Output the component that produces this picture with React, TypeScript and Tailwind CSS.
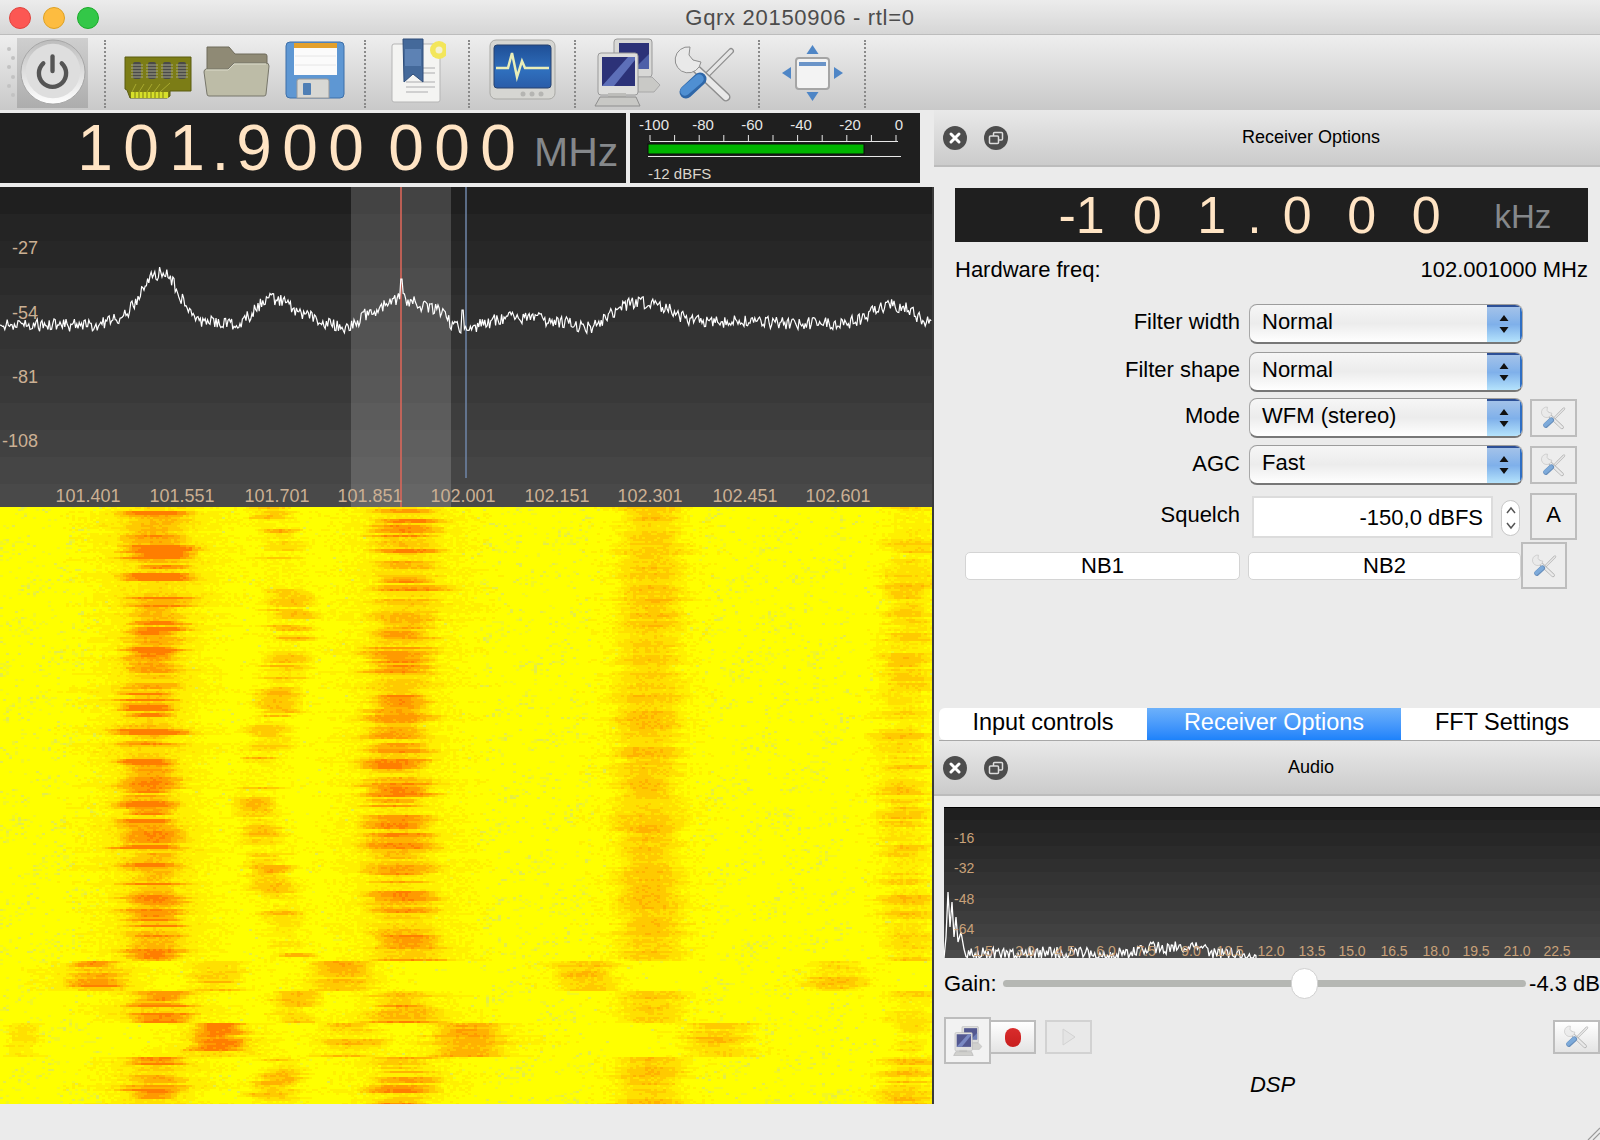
import React from "react";

// small seeded random so the waterfall and traces stay the same on every load
const makeRand = (seed: number) => () => {
  seed |= 0;
  seed = (seed + 0x6d2b79f5) | 0;
  let t = Math.imul(seed ^ (seed >>> 15), 1 | seed);
  t = (t + Math.imul(t ^ (t >>> 7), 61 | t)) ^ t;
  return ((t ^ (t >>> 14)) >>> 0) / 4294967296;
};

type Peak = { c: number; w: number; a: number; v: number };

const normalPeaks: Peak[] = [
  { c: 152, w: 34, a: 0.98, v: 0.55 },
  { c: 275, w: 24, a: 0.56, v: 0.75 },
  { c: 400, w: 38, a: 0.82, v: 0.6 },
  { c: 648, w: 38, a: 0.58, v: 0.28 },
  { c: 905, w: 30, a: 0.52, v: 0.5 },
];

const sectionFor = (y: number): Peak[] => {
  if (y >= 960 && y < 990)
    return [
      { c: 90, w: 32, a: 0.95, v: 0.5 },
      { c: 212, w: 30, a: 0.58, v: 0.55 },
      { c: 335, w: 34, a: 0.68, v: 0.55 },
      { c: 582, w: 34, a: 0.62, v: 0.3 },
      { c: 832, w: 32, a: 0.58, v: 0.4 },
    ];
  if (y >= 1022 && y < 1057)
    return [
      { c: 18, w: 22, a: 0.35, v: 0.4 },
      { c: 212, w: 30, a: 1.0, v: 0.65 },
      { c: 345, w: 34, a: 0.58, v: 0.6 },
      { c: 465, w: 44, a: 0.78, v: 0.22 },
      { c: 713, w: 38, a: 0.58, v: 0.35 },
      { c: 905, w: 22, a: 0.4, v: 0.5 },
    ];
  return normalPeaks;
};

const waterColors = ["#fff000", "#ffe000", "#ffca00", "#ffb200", "#ff9a00", "#ff7e00"];
const waterLimits = [0.2, 0.33, 0.47, 0.62, 0.77, 0.93];

const buildWaterfall = () => {
  const rand = makeRand(77);
  const paths: string[] = waterColors.map(() => "");
  let green = "";
  let green2 = "";
  let streaks = [1, 1, 1, 1, 1, 1];
  let widths = [1, 1, 1, 1, 1, 1];
  let moves = [0, 0, 0, 0, 0, 0];
  for (let row = 0; row < 299; row++) {
    const y = 507 + row * 2;
    const peaks = sectionFor(y);
    // streaks hold for a few rows, like one FFT frame smeared by the display
    streaks = streaks.map((s, n) => {
      if (rand() > 0.55) return s;
      const v = peaks[n] ? peaks[n].v : 0.4;
      return 1 - v * 0.35 + (rand() - 0.5) * v * 1.5;
    });
    widths = widths.map((w) => (rand() > 0.55 ? w : 0.75 + rand() * 0.55));
    moves = moves.map((m) => (rand() > 0.55 ? m : (rand() - 0.5) * 20));
    const slow = Math.sin(y / 70) * 5;
    const second = Math.sin((y - 560) / 55) * 13;
    for (let col = 0; col < 311; col++) {
      const x = col * 3;
      let i = 0;
      peaks.forEach((p, n) => {
        const c = p.c + slow * (p.v > 0.3 ? 1 : 0.4) + moves[n] * p.v + (p === normalPeaks[1] ? second : 0);
        const d = (x - c) / (p.w * widths[n]);
        const core = p.a * streaks[n] * Math.exp(-d * d * d * d * 0.6 - d * d * 0.5);
        const haze = p.a * 0.36 * Math.exp(-(d * d) / 5);
        i = Math.max(i, core, haze);
      });
      i += (rand() - 0.5) * 0.16;
      const run = `M${x} ${row * 2}h3v2h-3z`;
      let bucket = -1;
      waterLimits.forEach((lim, n) => {
        if (i > lim) bucket = n;
      });
      if (bucket >= 0) {
        paths[bucket] += run;
      } else {
        // pale green mottling sits in clumps, mostly away from the carriers
        const far = x < 100 || (x > 700 && x < 850) || (x > 480 && x < 590) ? 0.2 : 0.05;
        const clump = Math.sin(x / 17 + y / 9) * Math.sin(y / 23 - x / 31) > 0.15 ? 1 : 0.25;
        const r = rand();
        if (r < far * clump * 0.3) green2 += run;
        else if (r < far * clump) green += run;
      }
    }
  }
  return { paths, green, green2 };
};

const waterfall = buildWaterfall();

const envelope: [number, number][] = [
  [0, 325], [100, 325], [125, 315], [140, 295], [150, 278], [163, 272], [175, 285], [190, 315], [205, 322],
  [240, 325], [255, 310], [265, 298], [280, 300], [300, 312], [320, 322], [350, 328], [365, 315], [385, 305],
  [400, 298], [420, 305], [440, 312], [452, 325], [462, 330], [490, 322], [505, 318], [530, 318], [560, 322],
  [590, 328], [610, 315], [625, 305], [645, 303], [665, 308], [685, 318], [700, 322], [740, 322], [800, 323],
  [850, 323], [865, 316], [885, 305], [905, 307], [920, 318], [932, 325],
];

const envelopeAt = (x: number) => {
  for (let n = 1; n < envelope.length; n++) {
    const [x1, y1] = envelope[n];
    if (x <= x1) {
      const [x0, y0] = envelope[n - 1];
      return y0 + ((y1 - y0) * (x - x0)) / (x1 - x0);
    }
  }
  return 325;
};

const spectrumTrace = (() => {
  const rand = makeRand(11);
  const pts: string[] = [];
  for (let x = 0; x <= 932; x += 1.2) {
    let y = envelopeAt(x) + (rand() - 0.5) * 13;
    if (Math.abs(x - 401) < 1.3) y = 279;
    if (Math.abs(x - 463) < 1.3) y = 310;
    pts.push(`${x.toFixed(1)},${(y - 187).toFixed(1)}`);
  }
  return pts.join(" ");
})();

const audioTrace = (() => {
  const rand = makeRand(5);
  const pts: string[] = ["0,151", "2,130", "4,85", "6,120", "8,95", "10,130", "12,110", "14,135", "17,125", "20,142"];
  for (let x = 22; x < 312; x += 1.3) {
    const base = x < 60 ? 147 : x < 150 ? 146 : x < 175 ? 151 : x < 195 ? 146 : x < 265 ? 141 : x < 300 ? 147 : 152;
    const y = base + (rand() - 0.5) * 13;
    pts.push(`${x.toFixed(1)},${Math.min(y, 151).toFixed(1)}`);
  }
  pts.push("312,151");
  return pts.join(" ");
})();

const freqLabels = [
  ["101.401", 88], ["101.551", 182], ["101.701", 277], ["101.851", 370], ["102.001", 463],
  ["102.151", 557], ["102.301", 650], ["102.451", 745], ["102.601", 838],
] as const;

const audioFreqs = [
  ["1.5", 39], ["3.0", 81], ["4.5", 121], ["6.0", 162], ["7.5", 202], ["9.0", 247], ["10.5", 286], ["12.0", 327],
  ["13.5", 368], ["15.0", 408], ["16.5", 450], ["18.0", 492], ["19.5", 532], ["21.0", 573], ["22.5", 613],
] as const;

const bandShades = ["#1f1f1f", "#242424", "#272727", "#2b2b2b", "#2f2f2f", "#333333", "#363636", "#393939", "#3d3d3d", "#414141", "#454545", "#494949"];

const PowerButton = () => (
  <div className="ml-[2px] mt-[3px] flex h-[70px] w-[71px] items-center justify-center bg-gradient-to-b from-[#cfcfcf] to-[#adadad]">
    <svg viewBox="0 0 70 70" className="h-[68px] w-[68px]">
      <defs>
        <linearGradient id="powerRing" x1="0" y1="0" x2="0" y2="1">
          <stop offset="0" stopColor="#bcbcbc" />
          <stop offset="1" stopColor="#ffffff" />
        </linearGradient>
      </defs>
      <circle cx="35" cy="34" r="33" fill="url(#powerRing)" stroke="#a5a5a5" />
      <circle cx="35" cy="33" r="28" fill="#dedede" />
      <path d="M25 25a14 14 0 1 0 19 0" fill="none" stroke="#555" strokeWidth="4.5" strokeLinecap="round" />
      <path d="M34.500 18v15" fill="none" stroke="#555" strokeWidth="4.5" strokeLinecap="round" />
    </svg>
  </div>
);

const RamIcon = () => (
  <svg viewBox="0 0 68 44" className="ml-[18px] mt-[21px] h-[44px] w-[68px]">
    <path d="M1 1h66v34H46v5l-3 2H6l-3-8-2-1z" fill="#7c7d16" stroke="#5b5c10" />
    {[9, 24, 39, 54].map((x) => (
      <g key={x}>
        <rect x={x} y="6" width="8" height="17" rx="2" fill="#4a4a48" />
        <path d={`M${x - 2} 9h12M${x - 2} 12h12M${x - 2} 15h12M${x - 2} 18h12M${x - 2} 21h12`} stroke="#a5a58c" strokeWidth="1" />
      </g>
    ))}
    <path d="M12 28l-4 8M20 28l-5 8M28 28l-5 8M36 28l-6 8M46 27l-10 9" stroke="#a8a92e" strokeWidth="1" />
    <rect x="7" y="36" width="37" height="6" fill="#d7e02a" />
    <path d="M11 36v6M15 36v6M19 36v6M23 36v6M27 36v6M31 36v6M35 36v6M39 36v6" stroke="#7c7d16" />
  </svg>
);

const FolderIcon = () => (
  <svg viewBox="0 0 67 54" className="ml-[11px] mt-[9px] h-[54px] w-[67px]">
    <path d="M4 3h22l6 7h30a2 2 0 0 1 2 2v20H4z" fill="#8f8a75" stroke="#6e6a5a" />
    <path d="M3 25h22l6-6h32a3 3 0 0 1 3 3l-3 28a2 2 0 0 1-2 2H6a2 2 0 0 1-2-2L1 28a3 3 0 0 1 2-3z" fill="#bdbca7" stroke="#77766a" />
    <path d="M3 26h22l6-6h32" fill="none" stroke="#dbdac9" />
  </svg>
);

const FloppyIcon = () => (
  <svg viewBox="0 0 60 59" className="ml-[15px] mt-[6px] h-[59px] w-[60px]">
    <rect x="1" y="1" width="58" height="56" rx="4" fill="#5e97d3" stroke="#3d6fa8" />
    <rect x="9" y="2" width="43" height="32" fill="#fbfbfb" />
    <rect x="9" y="2" width="43" height="5" fill="#e3a02c" />
    <path d="M10 15h41M10 24h41" stroke="#e6e6e6" />
    <path d="M14 38h28a2 2 0 0 1 2 2v17H12V40a2 2 0 0 1 2-2z" fill="#d8d8d4" stroke="#999" />
    <rect x="18" y="42" width="8" height="12" rx="1" fill="#4f7fb5" />
  </svg>
);

const BookmarkIcon = () => (
  <svg viewBox="0 0 56 66" className="ml-[24px] mt-[3px] h-[66px] w-[56px]">
    <path d="M4 6h44a2 2 0 0 1 2 2v54a2 2 0 0 1-2 2H4a2 2 0 0 1-2-2V8a2 2 0 0 1 2-2z" fill="#f4f4f2" stroke="#b5b5b5" />
    <path d="M28 30h17M28 35h17M16 44h29M16 49h29M16 54h22" stroke="#d0d0d0" strokeWidth="2" />
    <path d="M13 1h20v43l-10-8-9 8z" fill="#44699a" stroke="#2e4c78" />
    <rect x="15" y="11" width="16" height="17" fill="#5d82b4" />
    <circle cx="49" cy="12" r="9" fill="#f3e65a" />
    <circle cx="49" cy="12" r="3.500" fill="#f4f1d0" />
  </svg>
);

const MonitorIcon = () => (
  <svg viewBox="0 0 67 61" className="ml-[19px] mt-[4px] h-[61px] w-[67px]">
    <defs>
      <linearGradient id="screenBlue" x1="0" y1="0" x2="0" y2="1">
        <stop offset="0" stopColor="#1f4f96" />
        <stop offset="0.6" stopColor="#2f6fbd" />
        <stop offset="1" stopColor="#2a5ca8" />
      </linearGradient>
    </defs>
    <rect x="1" y="1" width="65" height="59" rx="6" fill="#d6d6d2" stroke="#a9a9a5" />
    <rect x="5" y="6" width="57" height="43" rx="3" fill="url(#screenBlue)" stroke="#28436e" />
    <path d="M7 29h12l4-15 5 24 5-16 3 7h24" fill="none" stroke="#e9eeb8" strokeWidth="2.500" />
    <circle cx="34" cy="55" r="2.500" fill="#b5b5b2" />
    <circle cx="43" cy="55" r="2.500" fill="#b5b5b2" />
    <circle cx="52" cy="55" r="2.500" fill="#b5b5b2" />
  </svg>
);

const ComputersIcon = ({ className }: { className: string }) => (
  <svg viewBox="0 0 68 69" className={className}>
    <rect x="20" y="1" width="38" height="38" rx="3" fill="#d8d8d6" stroke="#999" />
    <rect x="25" y="5" width="30" height="26" fill="#2c3278" />
    <path d="M40 31l15-15v15z" fill="#4e60a8" />
    <path d="M44 39h14l8 8-6 7H44z" fill="#c9c9c6" stroke="#a8a8a8" />
    <rect x="4" y="15" width="40" height="42" rx="3" fill="#dededc" stroke="#999" />
    <rect x="8" y="19" width="33" height="29" fill="#2c3278" />
    <path d="M8 48l26-29h7v3L20 48z" fill="#5d6fb8" />
    <rect x="14" y="55" width="18" height="4" fill="#bdbdba" />
    <path d="M6 59h36l4 9H1z" fill="#c8c8c5" stroke="#8e8e8e" />
  </svg>
);

const ToolsIcon = ({ className }: { className: string }) => (
  <svg viewBox="0 0 62 58" className={className}>
    <path d="M57 6L29 34" stroke="#8e8e8e" strokeWidth="6" strokeLinecap="round" />
    <path d="M57 6L29 34" stroke="#e6e6e6" strokeWidth="3.500" strokeLinecap="round" />
    <path d="M15 17l37 35" stroke="#8e8e8e" strokeWidth="9" strokeLinecap="round" />
    <path d="M15 17l37 35" stroke="#e9e9e9" strokeWidth="6" strokeLinecap="round" />
    <path d="M16 2A13 13 0 1 0 27 17L19 15 15 10z" fill="#e9e9e9" stroke="#8e8e8e" />
    <path d="M26 34L12 47" stroke="#2f67a8" strokeWidth="13" strokeLinecap="round" />
    <path d="M25 34L11 46" stroke="#4f8fd2" strokeWidth="9.500" strokeLinecap="round" />
  </svg>
);

const ArrowsIcon = () => (
  <svg viewBox="0 0 63 58" className="ml-[21px] mt-[9px] h-[58px] w-[63px]">
    <path d="M31.500 1l6 9h-12z" fill="#4f86c6" />
    <path d="M31.500 57l6-9h-12z" fill="#4f86c6" />
    <path d="M1 29l9-6v12z" fill="#4f86c6" />
    <path d="M62 29l-9-6v12z" fill="#4f86c6" />
    <rect x="15" y="14" width="33" height="31" rx="3" fill="#f3f3f3" stroke="#a5a5a5" strokeWidth="2" />
    <rect x="18" y="18" width="27" height="4" fill="#6a94c8" />
  </svg>
);

const Separator = ({ className }: { className: string }) => (
  <div className={`mt-[5px] h-[68px] border-l-2 border-dotted border-[#8a8a8a] ${className}`} />
);

const DockTitle = ({ title, className }: { title: string; className: string }) => (
  <div className={`relative flex items-center justify-center border-b-2 border-[#bcbcbc] bg-gradient-to-b from-[#e9e9e9] to-[#cbcbcb] pl-[88px] ${className}`}>
    <div className="absolute left-[9px] flex items-center gap-[17px]">
      <svg viewBox="0 0 24 24" className="h-[24px] w-[24px]">
        <circle cx="12" cy="12" r="12" fill="#4d4d4d" />
        <path d="M8 8l8 8M16 8l-8 8" stroke="#fff" strokeWidth="3" strokeLinecap="round" />
      </svg>
      <svg viewBox="0 0 24 24" className="h-[24px] w-[24px]">
        <circle cx="12" cy="12" r="12" fill="#4d4d4d" />
        <rect x="9.500" y="6.500" width="9" height="7.500" rx="1" fill="none" stroke="#ddd" strokeWidth="1.500" />
        <rect x="5.500" y="10" width="9" height="7.500" rx="1" fill="#4d4d4d" stroke="#ddd" strokeWidth="1.500" />
      </svg>
    </div>
    <span className="text-[18px] text-black">{title}</span>
  </div>
);

const Combo = ({ value }: { value: string }) => (
  <div className="ml-[9px] flex h-[40px] w-[274px] overflow-hidden rounded-[8px] border-x border-t border-b-2 border-x-[#a8a8a8] border-t-[#9c9c9c] border-b-[#777] bg-gradient-to-b from-[#f6f6f6] via-[#ececec] to-white">
    <div className="flex-1 pl-[12px] text-[22px] leading-[34px] text-black">{value}</div>
    <div className="flex w-[35px] flex-col items-center justify-center border-r-2 border-t-2 border-r-[#2f6fc4] border-t-[#2c4f96] bg-gradient-to-b from-[#a3c2e9] via-[#7fb0ea] to-[#b5e3fc] pb-[2px]">
      <svg viewBox="0 0 12 22" className="h-[22px] w-[12px]">
        <path d="M6 2l4.500 6h-9zM6 20l4.500-6h-9z" fill="#111" />
      </svg>
    </div>
  </div>
);

const SquareButton = ({ className, children }: { className: string; children: React.ReactNode }) => (
  <div className={`flex items-center justify-center border-2 border-[#bdbdbd] ${className}`}>{children}</div>
);

const OptionRow = ({ label, className, labelClass = "", children }: { label: string; className: string; labelClass?: string; children?: React.ReactNode }) => (
  <div className={`flex items-start ${className}`}>
    <div className={`w-[304px] text-right text-[22px] leading-[36px] text-black ${labelClass}`}>{label}</div>
    {children}
  </div>
);

const WrenchButton = ({ className }: { className: string }) => (
  <SquareButton className={`bg-[#ededed] ${className}`}>
    <ToolsIcon className="h-[24px] w-[25px] opacity-70" />
  </SquareButton>
);

export default function App() {
  const ticks = Array.from({ length: 11 }, (_, n) => 650 + n * 24.6);
  return (
    <div className="relative flex h-[1140px] w-[1600px] flex-col overflow-hidden bg-[#ebebeb] [font-family:'Liberation_Sans',Arial,sans-serif]">
      {/* window title */}
      <div className="relative flex h-[35px] items-center justify-center border-b border-[#bdbdbd] bg-gradient-to-b from-[#ececec] to-[#d6d6d6]">
        <div className="absolute left-[9px] top-[7px] flex items-center gap-[12px]">
          <div className="h-[22px] w-[22px] rounded-full border border-[#e0443e] bg-[#fc5753]" />
          <div className="h-[22px] w-[22px] rounded-full border border-[#dea123] bg-[#fdbc40]" />
          <div className="h-[22px] w-[22px] rounded-full border border-[#1aab29] bg-[#33c748]" />
        </div>
        <span className="text-[22px] tracking-[0.7px] text-[#4c4c4c]">Gqrx 20150906 - rtl=0</span>
      </div>

      {/* toolbar */}
      <div className="flex h-[75px] items-start bg-gradient-to-b from-[#eeeeee] to-[#c9c9c9]">
        <div className="ml-[7px] mt-[12px] flex h-[50px] w-[8px] flex-col justify-between">
          {[0, 1, 2, 3, 4, 5].map((n) => (
            <div key={n} className={`h-[4px] w-[4px] rounded-full bg-[#c2c2c2] ${n % 2 ? "self-end" : ""}`} />
          ))}
        </div>
        <PowerButton />
        <Separator className="ml-[16px]" />
        <RamIcon />
        <FolderIcon />
        <FloppyIcon />
        <Separator className="ml-[19px]" />
        <BookmarkIcon />
        <Separator className="ml-[22px]" />
        <MonitorIcon />
        <Separator className="ml-[18px]" />
        <ComputersIcon className="ml-[18px] mt-[3px] h-[69px] w-[68px]" />
        <ToolsIcon className="ml-[12px] mt-[10px] h-[58px] w-[62px]" />
        <Separator className="ml-[22px]" />
        <ArrowsIcon />
        <Separator className="ml-[20px]" />
      </div>

      <div className="flex min-h-0 flex-1">
        {/* left: readouts, plot and waterfall */}
        <div className="w-[934px]">
          <div className="mt-[3px] flex h-[70px]">
            <div className="flex w-[626px] items-center bg-[#1f1f1f] pl-[72px] text-[64px] leading-none text-[#ffe4c4]">
              {["1", "0", "1", ".", "9", "0", "0", " ", "0", "0", "0"].map((d, n) => (
                <span key={n} className={`text-center ${d === "." ? "w-[21px]" : d === " " ? "w-[14px]" : "w-[46px]"}`}>
                  {d}
                </span>
              ))}
              <span className="ml-[13px] mt-[8px] text-[41px] text-[#85888b]">MHz</span>
            </div>
            <svg viewBox="630 113 290 70" className="ml-[4px] h-[70px] w-[290px] bg-[#1f1f1f]">
              <path d="M650 141.500H898" stroke="#e8e8e8" />
              {ticks.map((x, n) => (
                <path key={n} d={`M${x} 135V141`} stroke="#e8e8e8" />
              ))}
              {["-100", "-80", "-60", "-40", "-20", "0"].map((t, n) => (
                <text key={t} x={654 + n * 49} y="130" textAnchor="middle" fontSize="15" fill="#e6e6e6">
                  {t}
                </text>
              ))}
              <rect x="648" y="144" width="216" height="10" fill="#00b400" stroke="#0a0a0a" />
              <path d="M648 156.500H901" stroke="#e8e8e8" />
              <text x="648" y="179" fontSize="15" fill="#dcd6cc">
                -12 dBFS
              </text>
            </svg>
          </div>

          <div className="mt-[4px] border-r-2 border-[#3a3a3a]">
            <svg viewBox="0 187 932 320" className="block h-[320px] w-[932px] bg-[#1f1f1f]">
              {bandShades.map((c, n) => (
                <rect key={n} x="0" y={187 + n * 27} width="932" height="28" fill={c} />
              ))}
              <rect x="351" y="187" width="100" height="320" fill="#fff" fillOpacity="0.16" />
              <path d="M401 187V507" stroke="#e2675a" strokeWidth="1.500" />
              <path d="M466 187V478" stroke="#6f86a8" strokeWidth="1.500" />
              <polyline points={spectrumTrace} transform="translate(0 187)" fill="none" stroke="#fff" strokeWidth="1.200" />
              {[["-27", 254], ["-54", 319], ["-81", 383], ["-108", 447]].map(([t, y]) => (
                <text key={t} x="38" y={y} textAnchor="end" fontSize="18" fill="#cbb094">
                  {t}
                </text>
              ))}
              {freqLabels.map(([t, x]) => (
                <text key={t} x={x} y="502" textAnchor="middle" fontSize="18" fill="#cbb094">
                  {t}
                </text>
              ))}
            </svg>

            <svg viewBox="0 0 932 597" className="block h-[597px] w-[932px] bg-[#ffff00]">
              <path d={waterfall.green} fill="#f2f622" />
              <path d={waterfall.green2} fill="#e4ec48" />
              {waterfall.paths.map((d, n) => (
                <path key={n} d={d} fill={waterColors[n]} />
              ))}
            </svg>
          </div>
        </div>

        {/* right: dock widgets */}
        <div className="flex w-[666px] flex-col">
          <div className="flex h-[631px] flex-col">
            <DockTitle title="Receiver Options" className="h-[57px]" />
            <div className="ml-[21px] mt-[21px] flex h-[54px] w-[633px] items-center bg-[#1f1f1f] text-[52px] leading-none text-[#ffe4c4]">
              <span className="ml-[93px] w-[67px] text-center">-1</span>
              {["0", "1", ".", "0", "0", "0"].map((d, n) => (
                <span key={n} className={`text-center ${d === "." ? "w-[21px]" : "w-[64.500px]"}`}>
                  {d}
                </span>
              ))}
              <span className="ml-[36px] mt-[2px] text-[33px] text-[#85888b]">kHz</span>
            </div>
            <div className="ml-[21px] mt-[14px] flex h-[26px] w-[633px] items-center justify-between text-[22px] text-black">
              <span>Hardware freq:</span>
              <span>102.001000 MHz</span>
            </div>
            <OptionRow label="Filter width" className="mt-[22px] ml-[2px]">
              <Combo value="Normal" />
            </OptionRow>
            <OptionRow label="Filter shape" className="mt-[8px] ml-[2px]">
              <Combo value="Normal" />
            </OptionRow>
            <OptionRow label="Mode" className="mt-[6px] ml-[2px]">
              <Combo value="WFM (stereo)" />
              <WrenchButton className="ml-[7px] mt-[1px] h-[38px] w-[47px]" />
            </OptionRow>
            <OptionRow label="AGC" labelClass="mt-[1px]" className="mt-[7px] ml-[2px]">
              <Combo value="Fast" />
              <WrenchButton className="ml-[7px] mt-[1px] h-[38px] w-[47px]" />
            </OptionRow>
            <OptionRow label="Squelch" labelClass="mt-[4px]" className="mt-[8px] ml-[2px]">
              <div className="ml-[12px] mt-[3px] flex h-[42px] w-[241px] items-center justify-end border-2 border-[#dcdcdc] bg-white pr-[8px] text-[22px] text-black">
                -150,0 dBFS
              </div>
              <div className="ml-[8px] mt-[7px] flex h-[36px] w-[19px] items-center justify-center rounded-full border border-[#c8c8c8] bg-white">
                <svg viewBox="0 0 12 26" className="h-[26px] w-[12px]">
                  <path d="M2 8l4-5 4 5M2 18l4 5 4-5" fill="none" stroke="#555" strokeWidth="1.500" />
                </svg>
              </div>
              <SquareButton className="ml-[10px] h-[47px] w-[47px] bg-[#ededed] pb-[4px] text-[22px] text-black">A</SquareButton>
            </OptionRow>
            <div className="ml-[2px] mt-[2px] flex items-start text-[22px] text-black">
              <div className="ml-[29px] mt-[10px] flex h-[28px] w-[275px] items-center justify-center rounded-[5px] border border-[#d4d4d4] bg-white pb-[2px]">NB1</div>
              <div className="ml-[8px] mt-[10px] flex h-[28px] w-[273px] items-center justify-center rounded-[5px] border border-[#d4d4d4] bg-white pb-[2px]">NB2</div>
              <WrenchButton className="h-[47px] w-[46px]" />
            </div>
            <div className="ml-[5px] mt-auto flex h-[33px] border-b border-[#a8a8a8] text-[23.5px]">
              <div className="flex w-[208px] items-center justify-center rounded-l-[6px] bg-white pb-[3px] text-black">Input controls</div>
              <div className="flex w-[254px] items-center justify-center bg-gradient-to-b from-[#6db1fa] to-[#1c82fb] pb-[3px] text-white">Receiver Options</div>
              <div className="flex flex-1 items-center justify-center bg-white pb-[3px] pl-[3px] text-black">FFT Settings</div>
            </div>
          </div>

          <DockTitle title="Audio" className="h-[55px]" />
          <svg viewBox="0 0 656 151" className="ml-[10px] mt-[11px] block h-[151px] w-[656px] bg-[#1a1a1a]">
            {bandShades.map((c, n) => (
              <rect key={n} x="0" y={n * 13} width="656" height="14" fill={c} />
            ))}
            <rect x="0" y="0" width="656" height="1" fill="#000" />
            <polyline points={audioTrace} fill="none" stroke="#fff" strokeWidth="1.300" />
            {[["-16", 36], ["-32", 66], ["-48", 97], ["-64", 127]].map(([t, y]) => (
              <text key={t} x="10" y={y} fontSize="14" fill="#c9a27a">
                {t}
              </text>
            ))}
            {audioFreqs.map(([t, x]) => (
              <text key={t} x={x} y="149" textAnchor="middle" fontSize="14" fill="#c9a27a">
                {t}
              </text>
            ))}
          </svg>
          <div className="mt-[10px] flex h-[30px] items-center text-[22px] text-black">
            <span className="ml-[10px]">Gain:</span>
            <div className="relative ml-[6px] h-[7px] w-[524px] rounded-full bg-[#b5b7b3]">
              <div className="absolute left-[288px] top-[-12px] h-[31px] w-[27px] rounded-full border border-[#d0d0d0] bg-white" />
            </div>
            <span className="ml-[3px] whitespace-nowrap">-4.3 dB</span>
          </div>
          <div className="mt-[19px] flex items-start">
            <SquareButton className="ml-[10px] h-[47px] w-[47px] bg-[#f2f2f2]">
              <ComputersIcon className="h-[30px] w-[30px] opacity-80" />
            </SquareButton>
            <SquareButton className="mt-[3px] h-[34px] w-[45px] border-l-0 bg-gradient-to-b from-white to-[#e4e4e4]">
              <div className="h-[19px] w-[16px] rounded-full bg-gradient-to-b from-[#d92c2c] to-[#c81e1e]" />
            </SquareButton>
            <SquareButton className="ml-[9px] mt-[3px] h-[34px] w-[47px] border-[#d2d2d2] bg-[#e9e9e9]">
              <svg viewBox="0 0 16 20" className="h-[20px] w-[16px]">
                <path d="M2 2l12 8-12 8z" fill="#e4e4e4" stroke="#d2d2d2" />
              </svg>
            </SquareButton>
            <SquareButton className="ml-auto mt-[3px] h-[34px] w-[47px] bg-gradient-to-b from-white to-[#e4e4e4]">
              <ToolsIcon className="h-[24px] w-[25px] opacity-70" />
            </SquareButton>
          </div>
          <div className="mt-[4px] pl-[11px] text-center text-[22px] italic text-black">DSP</div>
        </div>
      </div>

      <svg viewBox="0 0 14 14" className="absolute bottom-0 right-0 h-[14px] w-[14px]">
        <path d="M2 14L14 2M7 14l7-7" stroke="#9a9a9a" strokeWidth="1.200" />
      </svg>
    </div>
  );
}
